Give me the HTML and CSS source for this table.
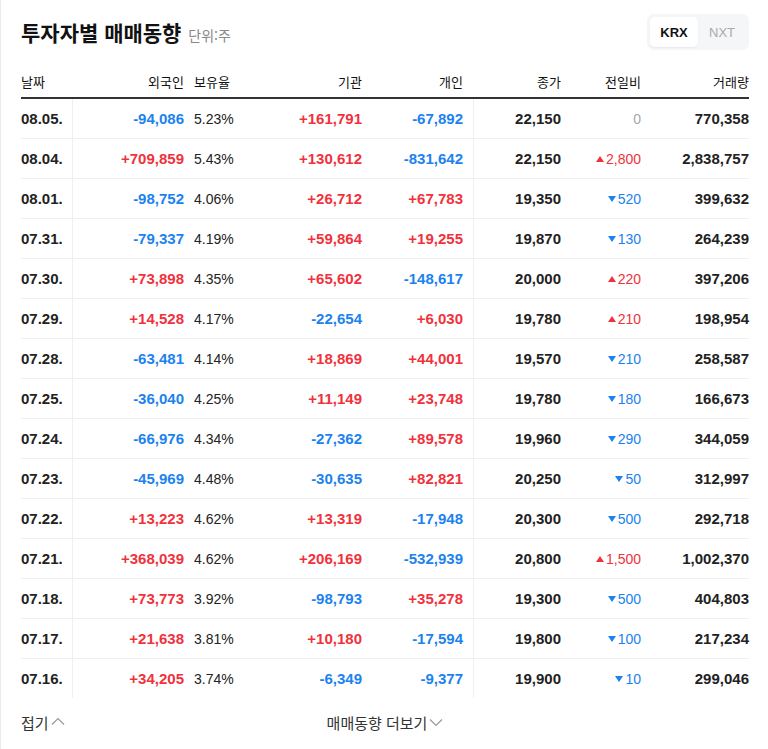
FILE: index.html
```html
<!DOCTYPE html>
<html lang="ko">
<head>
<meta charset="utf-8">
<title>투자자별 매매동향</title>
<link rel="stylesheet" href="styles.css">
</head>
<body>
<div class="page">
  <div class="top">
    <h2 class="title">투자자별 매매동향 <span class="unit">단위:주</span></h2>
    <div class="seg">
      <span class="seg-item on">KRX</span>
      <span class="seg-item">NXT</span>
    </div>
  </div>
  <table class="trade">
    <colgroup>
      <col class="c1"><col class="c2"><col class="c3"><col class="c4"><col class="c5"><col class="c6"><col class="c7"><col class="c8">
    </colgroup>
    <thead>
      <tr>
        <th class="l">날짜</th><th>외국인</th><th class="rate">보유율</th><th>기관</th><th class="ind">개인</th><th>종가</th><th>전일비</th><th>거래량</th>
      </tr>
    </thead>
    <tbody>
      <tr><td class="date">08.05.</td><td class="sep dn">-94,086</td><td class="rate">5.23%</td><td class="up">+161,791</td><td class="ind dn">-67,892</td><td class="close">22,150</td><td class="chg zero">0</td><td class="vol">770,358</td></tr>
      <tr><td class="date">08.04.</td><td class="sep up">+709,859</td><td class="rate">5.43%</td><td class="up">+130,612</td><td class="ind dn">-831,642</td><td class="close">22,150</td><td class="chg rise"><i class="tri"></i>2,800</td><td class="vol">2,838,757</td></tr>
      <tr><td class="date">08.01.</td><td class="sep dn">-98,752</td><td class="rate">4.06%</td><td class="up">+26,712</td><td class="ind up">+67,783</td><td class="close">19,350</td><td class="chg fall"><i class="tri"></i>520</td><td class="vol">399,632</td></tr>
      <tr><td class="date">07.31.</td><td class="sep dn">-79,337</td><td class="rate">4.19%</td><td class="up">+59,864</td><td class="ind up">+19,255</td><td class="close">19,870</td><td class="chg fall"><i class="tri"></i>130</td><td class="vol">264,239</td></tr>
      <tr><td class="date">07.30.</td><td class="sep up">+73,898</td><td class="rate">4.35%</td><td class="up">+65,602</td><td class="ind dn">-148,617</td><td class="close">20,000</td><td class="chg rise"><i class="tri"></i>220</td><td class="vol">397,206</td></tr>
      <tr><td class="date">07.29.</td><td class="sep up">+14,528</td><td class="rate">4.17%</td><td class="dn">-22,654</td><td class="ind up">+6,030</td><td class="close">19,780</td><td class="chg rise"><i class="tri"></i>210</td><td class="vol">198,954</td></tr>
      <tr><td class="date">07.28.</td><td class="sep dn">-63,481</td><td class="rate">4.14%</td><td class="up">+18,869</td><td class="ind up">+44,001</td><td class="close">19,570</td><td class="chg fall"><i class="tri"></i>210</td><td class="vol">258,587</td></tr>
      <tr><td class="date">07.25.</td><td class="sep dn">-36,040</td><td class="rate">4.25%</td><td class="up">+11,149</td><td class="ind up">+23,748</td><td class="close">19,780</td><td class="chg fall"><i class="tri"></i>180</td><td class="vol">166,673</td></tr>
      <tr><td class="date">07.24.</td><td class="sep dn">-66,976</td><td class="rate">4.34%</td><td class="dn">-27,362</td><td class="ind up">+89,578</td><td class="close">19,960</td><td class="chg fall"><i class="tri"></i>290</td><td class="vol">344,059</td></tr>
      <tr><td class="date">07.23.</td><td class="sep dn">-45,969</td><td class="rate">4.48%</td><td class="dn">-30,635</td><td class="ind up">+82,821</td><td class="close">20,250</td><td class="chg fall"><i class="tri"></i>50</td><td class="vol">312,997</td></tr>
      <tr><td class="date">07.22.</td><td class="sep up">+13,223</td><td class="rate">4.62%</td><td class="up">+13,319</td><td class="ind dn">-17,948</td><td class="close">20,300</td><td class="chg fall"><i class="tri"></i>500</td><td class="vol">292,718</td></tr>
      <tr><td class="date">07.21.</td><td class="sep up">+368,039</td><td class="rate">4.62%</td><td class="up">+206,169</td><td class="ind dn">-532,939</td><td class="close">20,800</td><td class="chg rise"><i class="tri"></i>1,500</td><td class="vol">1,002,370</td></tr>
      <tr><td class="date">07.18.</td><td class="sep up">+73,773</td><td class="rate">3.92%</td><td class="dn">-98,793</td><td class="ind up">+35,278</td><td class="close">19,300</td><td class="chg fall"><i class="tri"></i>500</td><td class="vol">404,803</td></tr>
      <tr><td class="date">07.17.</td><td class="sep up">+21,638</td><td class="rate">3.81%</td><td class="up">+10,180</td><td class="ind dn">-17,594</td><td class="close">19,800</td><td class="chg fall"><i class="tri"></i>100</td><td class="vol">217,234</td></tr>
      <tr><td class="date">07.16.</td><td class="sep up">+34,205</td><td class="rate">3.74%</td><td class="dn">-6,349</td><td class="ind dn">-9,377</td><td class="close">19,900</td><td class="chg fall"><i class="tri"></i>10</td><td class="vol">299,046</td></tr>
    </tbody>
  </table>
  <div class="foot">
    <a class="fold">접기<svg class="chev" width="14" height="8" viewBox="0 0 14 8"><path d="M1 7.5L7 1.5L13 7.5" fill="none" stroke="#999" stroke-width="1.2"/></svg></a>
    <a class="more">매매동향 더보기<svg class="chev" width="14" height="8" viewBox="0 0 14 8"><path d="M1 0.5L7 6.5L13 0.5" fill="none" stroke="#999" stroke-width="1.2"/></svg></a>
    <span class="spacer"></span>
  </div>
</div>
</body>
</html>
```

FILE: styles.css
```css
html, body {
  margin: 0;
  padding: 0;
  background: #fff;
}
body {
  font-family: "Liberation Sans", "Noto Sans CJK KR", sans-serif;
  color: #111;
}
.page {
  box-sizing: border-box;
  min-height: 749px;
  border-left: 1px solid #ebebeb;
  padding: 14px 19px 0 20px;
}
.top {
  display: flex;
  align-items: center;
  justify-content: space-between;
  height: 36px;
}
.title {
  margin: 0;
  font-family: "Noto Sans CJK KR", sans-serif;
  font-size: 21px;
  font-weight: 700;
  color: #111;
  letter-spacing: 0;
}
.unit {
  font-size: 14px;
  font-weight: 400;
  color: #888;
  margin-left: 1px;
}
.seg {
  display: flex;
  box-sizing: border-box;
  height: 36px;
  padding: 3px;
  background: #f5f6f8;
  border-radius: 7px;
}
.seg-item {
  width: 48px;
  height: 30px;
  display: flex;
  align-items: center;
  justify-content: center;
  font-size: 13px;
  color: #aaa;
  border-radius: 5px;
}
.seg-item.on {
  background: #fff;
  color: #111;
  font-weight: 700;
  box-shadow: 0 1px 2px rgba(0,0,0,0.06);
}
.trade {
  margin-top: 12px;
  width: 728px;
  table-layout: fixed;
  border-collapse: separate;
  border-spacing: 0;
}
.c1 { width: 51px; }
.c2 { width: 112px; }
.c3 { width: 78px; }
.c4 { width: 100px; }
.c5 { width: 112px; }
.c6 { width: 87px; }
.c7 { width: 80px; }
.c8 { width: 108px; }
th {
  font-family: "Noto Sans CJK KR", sans-serif;
  font-size: 13px;
  font-weight: 400;
  color: #111;
  text-align: right;
  line-height: 20px;
  padding: 10px 0 5px;
  border-bottom: 2px solid #333;
  white-space: nowrap;
}
th.l { text-align: left; }
td {
  height: 39px;
  padding: 0;
  text-align: right;
  vertical-align: middle;
  font-size: 15px;
  font-weight: 700;
  border-bottom: 1px solid #efefef;
  white-space: nowrap;
}
tbody tr:last-child td { border-bottom: 0; }
.date { text-align: left; color: #222; }
.sep { border-left: 1px solid #efefef; }
th.rate, td.rate { text-align: left; padding-left: 10px; }
td.rate { font-size: 14px; font-weight: 400; color: #222; }
th.ind { padding-right: 11px; }
td.ind { padding-right: 10px; border-right: 1px solid #efefef; }
.up { color: #f0323c; }
.dn { color: #1b82f0; }
.close, .vol { color: #222; }
.chg { font-size: 14px; font-weight: 400; }
.chg.zero { color: #a3a8ad; }
.chg.rise { color: #f0323c; }
.chg.fall { color: #1b82f0; }
.tri {
  display: inline-block;
  width: 0;
  height: 0;
  margin-right: 2px;
  vertical-align: 2px;
  border-left: 4px solid transparent;
  border-right: 4px solid transparent;
}
.rise .tri { border-bottom: 6px solid #f0323c; }
.fall .tri { border-top: 6px solid #1b82f0; }
.foot {
  display: grid;
  grid-template-columns: 1fr auto 1fr;
  align-items: center;
  height: 48px;
  font-family: "Noto Sans CJK KR", sans-serif;
  font-size: 15px;
  color: #333;
}
.foot a {
  display: inline-flex;
  align-items: center;
  color: #333;
  text-decoration: none;
}
.chev { margin-left: 2px; }
.fold .chev { margin-top: -2px; }
.more .chev { margin-top: 1px; }
```
